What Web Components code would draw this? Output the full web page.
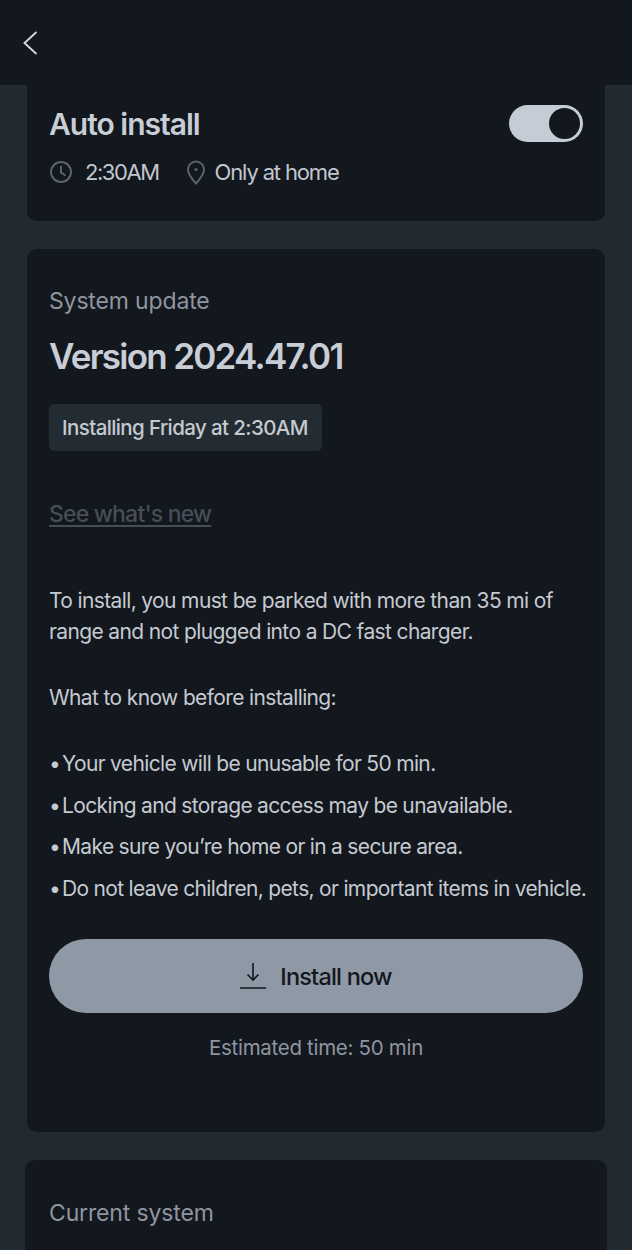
<!DOCTYPE html>
<html>
<head>
<meta charset="utf-8">
<style>
  html, body { margin: 0; padding: 0; background: #212a31; }
  body { width: 632px; height: 1250px; overflow: hidden; font-family: Inter, "Liberation Sans", sans-serif; }
  #top { height: 136px; margin-bottom: 28px; }
  #main { height: 883px; margin-bottom: 28px; }
  #rest { margin: 0 25px; padding: 39px 24px 0; height: 90px; border-radius: 10px 10px 0 0; }
</style>
</head>
<body>
<top-bar></top-bar>
<info-card id="top" flat>
  <auto-install></auto-install>
</info-card>
<info-card id="main">
  <update-info></update-info>
</info-card>
<info-card id="rest">
  <card-label>Current system</card-label>
</info-card>

<script>
const back = `<svg width="18" height="26" viewBox="0 0 18 26" fill="none" stroke="#d3d8df" stroke-width="1.9"><path d="M15.500 2 L3.500 13 L15.500 24"/></svg>`;

class TopBar extends HTMLElement {
  constructor() {
    super();
    this.attachShadow({ mode: "open" });
    this.shadowRoot.innerHTML = `
      <style>
        :host { display: flex; align-items: center; height: 85px; background: #13171e; padding: 0 0 0 21px; box-sizing: border-box; }
        svg { display: block; margin-top: 1px; }
      </style>
      ${back}`;
  }
}
customElements.define("top-bar", TopBar);

class InfoCard extends HTMLElement {
  constructor() {
    super();
    this.attachShadow({ mode: "open" });
    this.shadowRoot.innerHTML = `
      <style>
        :host { display: block; margin: 0 27px; padding: 0 22px; background: #13171e; border-radius: 10px; box-sizing: border-box; }
        :host([flat]) { border-radius: 0 0 10px 10px; }
      </style>
      <slot></slot>`;
  }
}
customElements.define("info-card", InfoCard);

class CardLabel extends HTMLElement {
  constructor() {
    super();
    this.attachShadow({ mode: "open" });
    this.shadowRoot.innerHTML = `
      <style>
        :host { display: block; font-size: 23px; line-height: 28px; letter-spacing: -0.15px; color: #8f95a0; }
      </style>
      <slot></slot>`;
  }
}
customElements.define("card-label", CardLabel);

class ToggleSwitch extends HTMLElement {
  constructor() {
    super();
    this.attachShadow({ mode: "open" });
    this.shadowRoot.innerHTML = `
      <style>
        :host { display: block; width: 74px; height: 37px; border-radius: 19px; background: #c5ccd6; position: relative; }
        i { position: absolute; top: 3px; right: 3px; width: 31px; height: 31px; border-radius: 50%; background: #13171e; }
      </style>
      <i></i>`;
  }
}
customElements.define("toggle-switch", ToggleSwitch);

class AutoInstall extends HTMLElement {
  constructor() {
    super();
    this.attachShadow({ mode: "open" });
    this.shadowRoot.innerHTML = `
      <style>
        :host { display: block; padding-top: 20px; }
        .row { display: flex; justify-content: space-between; align-items: center; height: 37px; }
        h2 { margin: 0; font-size: 30px; font-weight: 600; letter-spacing: -1px; color: #c8cdd6; }
        .meta { display: flex; align-items: center; margin-top: 14px; font-size: 22px; line-height: 32px; color: #c1c6cf; }
        svg { display: block; flex: none; }
        .time { margin-left: 12px; margin-right: 27px; letter-spacing: -1.45px; }
        .place { margin-left: 9px; letter-spacing: -1.15px; }
      </style>
      <div class="row"><h2>Auto install</h2><toggle-switch></toggle-switch></div>
      <div class="meta">
        <svg width="24" height="24" viewBox="0 0 24 24" fill="none" stroke="#5c636b" stroke-width="2"><circle cx="12" cy="12" r="10"/><path d="M12 6v6.500l4.500 3"/></svg>
        <span class="time">2:30AM</span>
        <svg width="20" height="26" viewBox="0 0 20 26" fill="none" stroke="#5c636b" stroke-width="2"><path d="M10 24.500C5 19 2 15 2 10.500a8 8 0 0 1 16 0C18 15 15 19 10 24.500z"/><circle cx="10" cy="10.500" r="1.600" fill="#5c636b" stroke="none"/></svg>
        <span class="place">Only at home</span>
      </div>`;
  }
}
customElements.define("auto-install", AutoInstall);

class InstallButton extends HTMLElement {
  constructor() {
    super();
    this.attachShadow({ mode: "open" });
    this.shadowRoot.innerHTML = `
      <style>
        :host { display: flex; align-items: center; justify-content: center; gap: 14px; height: 74px; border-radius: 37px; background: #8e99a5; color: #13171e; font-size: 23.5px; font-weight: 500; letter-spacing: -0.8px; }
        svg { display: block; }
        span { padding-top: 2px; }
      </style>
      <svg width="26" height="28" viewBox="0 0 26 28" fill="none" stroke="#13171e" stroke-width="1.600"><path d="M13 1v17M7.500 12.500 13 18l5.500-5.500M0 26h26"/></svg>
      <span><slot></slot></span>`;
  }
}
customElements.define("install-button", InstallButton);

class UpdateInfo extends HTMLElement {
  constructor() {
    super();
    this.attachShadow({ mode: "open" });
    this.shadowRoot.innerHTML = `
      <style>
        :host { display: block; padding-top: 38px; color: #c5cad1; }
        h1 { margin: 20px 0 0; font-size: 35px; line-height: 42px; font-weight: 600; letter-spacing: -1.73px; color: #c8cdd6; }
        .chip { display: inline-block; margin-top: 27px; padding: 0 14px 0 13px; height: 47px; line-height: 47px; background: #242c33; border-radius: 5px; font-size: 20.5px; font-weight: 500; letter-spacing: -0.6px; color: #c5cad1; }
        a { display: block; width: max-content; margin-top: 48px; font-size: 23px; line-height: 30px; font-weight: 500; letter-spacing: -0.8px; color: #464e57; text-decoration: underline; text-underline-offset: 3px; }
        p { margin: 0; font-size: 21px; line-height: 31px; letter-spacing: -0.63px; }
        .intro { margin-top: 56px; }
        .know { margin-top: 35px; }
        ul { list-style: none; margin: 35px 0 0; padding: 0; width: 560px; font-size: 21px; line-height: 31px; letter-spacing: -0.63px; white-space: nowrap; }
        li + li { margin-top: 10.5px; }
        li { word-spacing: -0.2px; }
        li b { font-weight: 400; word-spacing: -3.5px; }
        install-button { margin-top: 35px; }
        .est { margin-top: 20px; text-align: center; font-size: 20.5px; line-height: 30px; letter-spacing: -0.3px; color: #8f95a0; }
      </style>
      <card-label>System update</card-label>
      <h1>Version 2024.47.01</h1>
      <div class="chip">Installing Friday at 2:30AM</div>
      <a>See what's new</a>
      <p class="intro">To install, you must be parked with more than 35 mi of<br>range and not plugged into a DC fast charger.</p>
      <p class="know">What to know before installing:</p>
      <ul>
        <li><b>• </b>Your vehicle will be unusable for 50 min.</li>
        <li><b>• </b>Locking and storage access may be unavailable.</li>
        <li><b>• </b>Make sure you’re home or in a secure area.</li>
        <li><b>• </b>Do not leave children, pets, or important items in vehicle.</li>
      </ul>
      <install-button>Install now</install-button>
      <div class="est">Estimated time: 50 min</div>`;
  }
}
customElements.define("update-info", UpdateInfo);
</script>
</body>
</html>
